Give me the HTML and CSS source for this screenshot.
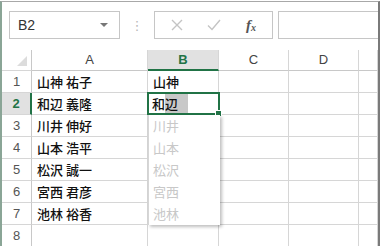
FILE: index.html
```html
<!DOCTYPE html>
<html lang="ja">

<head>
  <meta charset="UTF-8">
  <meta name="viewport" content="width=device-width, initial-scale=1.0">
  <title>Sheet</title>
  <link rel="stylesheet" href="styles.css">
</head>

<body>
  <div class="frame">

    <div class="toolbar">
      <div class="name-box">
        <span>B2</span>
        <span class="arrow"></span>
      </div>
      <div class="dots">⋮</div>
      <div class="fx-buttons">
        <svg class="btn" width="14" height="14" viewBox="0 0 14 14">
          <path d="M2 2 L12 12 M12 2 L2 12" stroke="#c4c4c4" stroke-width="1.4" fill="none" />
        </svg>
        <svg class="btn" width="16" height="14" viewBox="0 0 16 14">
          <path d="M2 7.5 L6 11.5 L14 2" stroke="#c4c4c4" stroke-width="1.4" fill="none" />
        </svg>
        <span class="fx">f<sub>x</sub></span>
      </div>
      <div class="formula"></div>
    </div>

    <div class="sheet">
      <div class="grid">
        <!-- header row -->
        <div class="corner"><span class="tri"></span></div>
        <div class="col-head">A</div>
        <div class="col-head active">B</div>
        <div class="col-head">C</div>
        <div class="col-head">D</div>
        <div class="col-head"></div>

        <div class="row-head">1</div>
        <div class="cell">山神 祐子</div>
        <div class="cell">山神</div>
        <div class="cell"></div>
        <div class="cell"></div>
        <div class="cell"></div>

        <div class="row-head active">2</div>
        <div class="cell">和辺 義隆</div>
        <div class="cell current">和<span class="sel">辺</span></div>
        <div class="cell"></div>
        <div class="cell"></div>
        <div class="cell"></div>

        <div class="row-head">3</div>
        <div class="cell">川井 伸好</div>
        <div class="cell"></div>
        <div class="cell"></div>
        <div class="cell"></div>
        <div class="cell"></div>

        <div class="row-head">4</div>
        <div class="cell">山本 浩平</div>
        <div class="cell"></div>
        <div class="cell"></div>
        <div class="cell"></div>
        <div class="cell"></div>

        <div class="row-head">5</div>
        <div class="cell">松沢 誠一</div>
        <div class="cell"></div>
        <div class="cell"></div>
        <div class="cell"></div>
        <div class="cell"></div>

        <div class="row-head">6</div>
        <div class="cell">宮西 君彦</div>
        <div class="cell"></div>
        <div class="cell"></div>
        <div class="cell"></div>
        <div class="cell"></div>

        <div class="row-head">7</div>
        <div class="cell">池林 裕香</div>
        <div class="cell"></div>
        <div class="cell"></div>
        <div class="cell"></div>
        <div class="cell"></div>

        <div class="row-head">8</div>
        <div class="cell"></div>
        <div class="cell"></div>
        <div class="cell"></div>
        <div class="cell"></div>
        <div class="cell"></div>
      </div>

      <!-- autocomplete list under B2 -->
      <ul class="pick-list">
        <li>川井</li>
        <li>山本</li>
        <li>松沢</li>
        <li>宮西</li>
        <li>池林</li>
      </ul>
    </div>

  </div>
</body>

</html>
```

FILE: styles.css
```css
body {
  margin: 0;
  font-family: "Noto Sans CJK JP", "Liberation Sans", sans-serif;
  background: #fff;
}

.frame {
  width: 380px;
  height: 246px;
  box-sizing: border-box;
  border-top: 1px solid #a8a8a8;
  border-left: 2px solid #8aa596;
  border-right: 2px solid #7a7a7a;
  margin-top: 1px;
  overflow: hidden;
  background: #fff;
}

/* formula bar */
.toolbar {
  display: flex;
  align-items: center;
  height: 28px;
  padding: 9px 0 0 7px;
  margin-bottom: 11px;
}

.name-box {
  display: flex;
  align-items: center;
  justify-content: space-between;
  box-sizing: border-box;
  width: 111px;
  height: 28px;
  padding: 0 11px 0 8px;
  border: 1px solid #c6c6c6;
  font-family: "Liberation Sans", sans-serif;
  font-size: 14px;
  color: #333;
}

.arrow {
  width: 0;
  height: 0;
  border-left: 4px solid transparent;
  border-right: 4px solid transparent;
  border-top: 4px solid #777;
}

.dots {
  width: 34px;
  text-align: center;
  color: #b8b8b8;
  font-family: "DejaVu Sans", sans-serif;
  font-size: 13px;
}

.fx-buttons {
  display: flex;
  align-items: center;
  box-sizing: border-box;
  width: 119px;
  height: 28px;
  padding-left: 15px;
  border: 1px solid #c6c6c6;
  gap: 22px;
}

.fx {
  font-family: "Liberation Serif", serif;
  font-style: italic;
  font-weight: bold;
  font-size: 15px;
  color: #555;
  margin-left: 2px;
}

.fx sub {
  font-size: 10px;
  vertical-align: -1px;
}

.formula {
  box-sizing: border-box;
  height: 28px;
  margin-left: 5px;
  flex: 1;
  border: 1px solid #c6c6c6;
  border-right: 0;
}

/* sheet grid */
.sheet {
  position: relative;
}

.grid {
  display: grid;
  grid-template-columns: 30px 116px 71px 70px 70px 1fr;
  grid-template-rows: 21px;
  grid-auto-rows: 22px;
}

.grid > div {
  box-sizing: border-box;
  border-right: 1px solid #d6d6d6;
  border-bottom: 1px solid #d6d6d6;
}

.corner {
  position: relative;
  border-right-color: #c8c8c8 !important;
}

.tri {
  position: absolute;
  right: 4px;
  bottom: 4px;
  width: 0;
  height: 0;
  border-left: 10px solid transparent;
  border-bottom: 10px solid #dcdcdc;
}

.col-head {
  font-family: "Liberation Sans", sans-serif;
  font-size: 13px;
  color: #444;
  text-align: center;
  line-height: 20px;
  border-bottom-color: #c8c8c8 !important;
}

.col-head.active {
  background: #e1e1e1;
  color: #217346;
  font-weight: bold;
  border-bottom: 2px solid #217346 !important;
}

.row-head {
  font-family: "Liberation Sans", sans-serif;
  font-size: 13px;
  color: #555;
  text-align: center;
  line-height: 21px;
  border-right-color: #c8c8c8 !important;
}

.row-head.active {
  background: #e1e1e1;
  color: #217346;
  font-weight: bold;
  border-right: 2px solid #217346 !important;
}

.cell {
  font-size: 13px;
  font-weight: 500;
  line-height: 21px;
  padding-left: 5px;
  color: #111;
  white-space: nowrap;
  overflow: hidden;
}

.cell.current {
  position: relative;
  overflow: visible;
  padding-left: 3px;
  line-height: 19px;
  border: 2px solid #217346 !important;
  margin: -1px 0 0 -1px;
  width: 73px;
  height: 23px;
}

.cell.current::after {
  content: "";
  position: absolute;
  right: -4px;
  bottom: -4px;
  width: 5px;
  height: 5px;
  background: #217346;
  border: 1px solid #fff;
}

.sel {
  display: inline-block;
  background: #c8c8c8;
  padding-right: 10px;
}

/* autocomplete list */
.pick-list {
  position: absolute;
  left: 146px;
  top: 65px;
  width: 71px;
  margin: 0;
  padding: 0;
  list-style: none;
  background: #fff;
  border-left: 1px solid #d6d6d6;
  box-shadow: 2px 2px 3px rgba(0, 0, 0, 0.25);
}

.pick-list li {
  height: 22px;
  line-height: 22px;
  padding-left: 4px;
  font-size: 13px;
  color: #c8c8c8;
}
```
